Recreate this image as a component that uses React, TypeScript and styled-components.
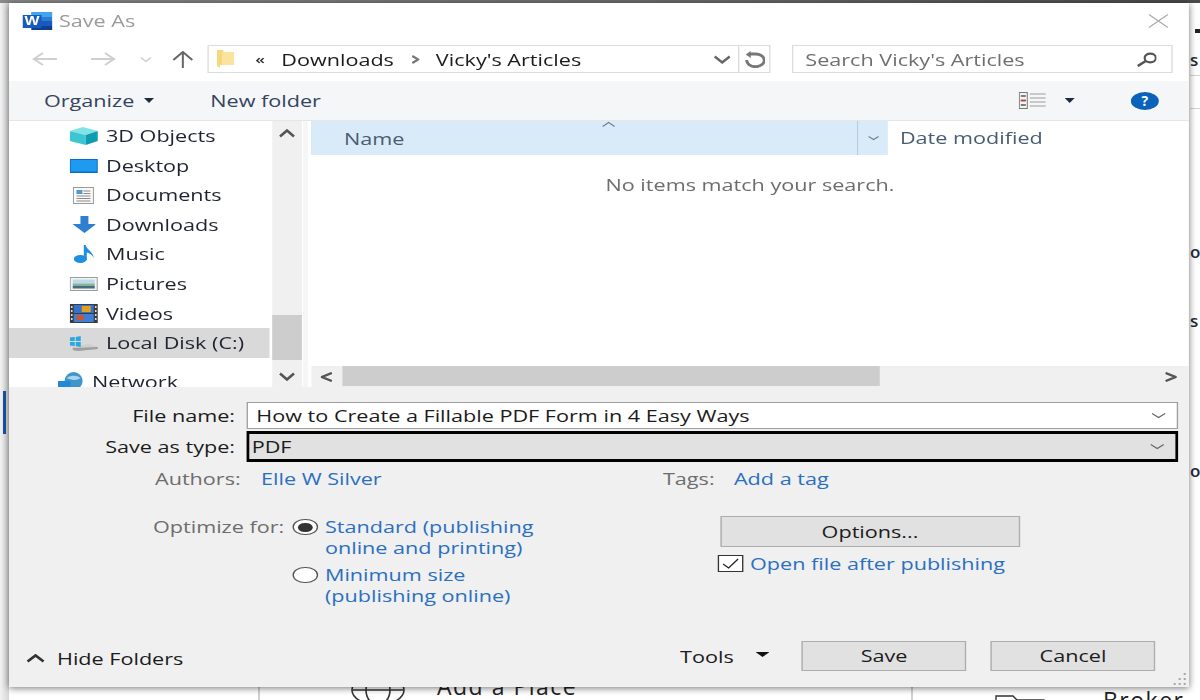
import React from "react"
import styled, { createGlobalStyle } from "styled-components"

// the source shot is stretched sideways, so the dialog is laid out narrow and scaled on x
const S = 1.35
const x = (n: number) => `${n / S}px`

const GlobalStyle = createGlobalStyle`
  html, body {
    margin: 0;
    width: 1200px;
    height: 700px;
    overflow: hidden;
    background: #fff;
  }
  * { box-sizing: border-box; }
`

const Ico: React.FC<{ w: number; h: number; children: React.ReactNode }> = ({ w, h, children }) => (
  <IcoSvg $w={w} $h={h} viewBox={`0 0 ${w} ${h}`} preserveAspectRatio="none">
    {children}
  </IcoSvg>
)

const Chevron: React.FC<{ dir: "up" | "down" | "left" | "right"; color?: string; w?: number; h?: number; sw?: number }> = ({
  dir,
  color = "#555",
  w = 16,
  h = 9,
  sw = 2.4,
}) => {
  const d = {
    up: `M1 ${h - 1.5} L${w / 2} 1.5 L${w - 1} ${h - 1.5}`,
    down: `M1 1.5 L${w / 2} ${h - 1.5} L${w - 1} 1.5`,
    left: `M${w - 1} 1 L1 ${h / 2} L${w - 1} ${h - 1}`,
    right: `M1 1 L${w - 1} ${h / 2} L1 ${h - 1}`,
  }[dir]
  return (
    <Ico w={w} h={h}>
      <path d={d} fill="none" stroke={color} strokeWidth={sw} />
    </Ico>
  )
}

const Caret: React.FC<{ color?: string; w?: number; h?: number }> = ({ color = "#1c2b44", w = 10, h = 5 }) => (
  <Ico w={w} h={h}>
    <polygon points={`0,0 ${w},0 ${w / 2},${h}`} fill={color} />
  </Ico>
)

const ArrowIcon: React.FC<{ flip?: boolean; color: string }> = ({ flip, color }) => (
  <Ico w={26} h={16}>
    <g transform={flip ? "translate(26 0) scale(-1 1)" : undefined} fill="none" stroke={color} strokeWidth="2">
      <path d="M1 8 H25" />
      <path d="M11 2 L2 8 L11 14" />
    </g>
  </Ico>
)

const WordLogo = () => (
  <Ico w={30} h={18}>
    <rect x="9" y="0" width="21" height="18" fill="#2b7cd3" />
    <rect x="9" y="0" width="21" height="5" fill="#41a5ee" />
    <rect x="9" y="9" width="21" height="5" fill="#185abd" />
    <rect x="9" y="14" width="21" height="4" fill="#103f91" />
    <rect x="0" y="3" width="19" height="13" fill="#185abd" />
    <text x="9.5" y="13.4" textAnchor="middle" fontFamily="Liberation Sans, sans-serif" fontWeight="700" fontSize="12" fill="#fff" textLength="15" lengthAdjust="spacingAndGlyphs">
      W
    </text>
  </Ico>
)

const navIcons: Record<string, React.ReactNode> = {
  cube: (
    <Ico w={28} h={18}>
      <polygon points="0,4 13,0 28,4 16,8" fill="#7fe3e8" />
      <polygon points="0,4 16,8 16,18 0,14" fill="#3cc6d3" />
      <polygon points="16,8 28,4 28,14 16,18" fill="#0f9bb0" />
    </Ico>
  ),
  desktop: (
    <Ico w={28} h={14}>
      <rect x="0" y="0" width="28" height="14" fill="#0a6cc4" />
      <rect x="1" y="1" width="26" height="11.5" fill="#1e9af0" />
    </Ico>
  ),
  documents: (
    <Ico w={22} h={17}>
      <rect x="1" y="0.5" width="20" height="16" fill="#fafafa" stroke="#9a9a9a" />
      <rect x="4" y="3" width="6" height="4" fill="#4e9ad8" />
      <path d="M11 4H18M11 6.5H18M4 9H18M4 11.5H18M4 14H18" stroke="#8a8a8a" strokeWidth="1" />
    </Ico>
  ),
  downloads: (
    <Ico w={24} h={17}>
      <polygon points="8,0 16,0 16,8 24,8 12,17 0,8 8,8" fill="#2f7fd0" />
    </Ico>
  ),
  music: (
    <Ico w={20} h={18}>
      <ellipse cx="6.5" cy="14" rx="6.5" ry="4" fill="#1f8fe0" />
      <path d="M10 15 V0 H12 C13 5 19 6 20 13 C18 9 15 8 13 7.5 V15 Z" fill="#1f8fe0" />
    </Ico>
  ),
  pictures: (
    <Ico w={28} h={14}>
      <rect x="0.5" y="0.5" width="27" height="13" fill="#f3f3f3" stroke="#9c9c9c" />
      <rect x="3" y="2.5" width="22" height="4" fill="#b9dbea" />
      <rect x="3" y="6.5" width="22" height="2.5" fill="#8fae9a" />
      <rect x="3" y="9" width="22" height="2.5" fill="#3f6f80" />
    </Ico>
  ),
  videos: (
    <Ico w={28} h={19}>
      <rect x="0" y="0" width="28" height="19" fill="#3b3b3b" />
      <rect x="4" y="1" width="20" height="8" fill="#3273cf" />
      <rect x="4" y="10" width="20" height="8" fill="#3f7fd8" />
      <rect x="12" y="2" width="9" height="6" fill="#e0a020" />
      <rect x="7" y="11" width="7" height="5" fill="#d3532b" />
      <path d="M2 2V17M26 2V17" stroke="#ddd" strokeWidth="1.6" strokeDasharray="2 2" />
    </Ico>
  ),
  disk: (
    <Ico w={28} h={15}>
      <polygon points="3,10 20,8 28,11 28,13 8,15 3,14" fill="#cfcfcf" />
      <polygon points="3,12 28,11 28,13 8,15 3,14" fill="#9f9f9f" />
      <path d="M0 1.5 L5 1 V5 H0 Z M6 1 L11 0 V5 H6 Z M0 6 H5 V10 L0 9.5 Z M6 6 H11 V11 L6 10 Z" fill="#25a9e0" />
    </Ico>
  ),
  network: (
    <Ico w={27} h={20}>
      <circle cx="16" cy="9" r="9" fill="#3f97c9" />
      <path d="M9 6 C13 3 19 3 23 6 C19 9 13 8 9 6Z" fill="#a9d6ea" />
      <rect x="0" y="9" width="13" height="11" fill="#2488d8" />
    </Ico>
  ),
}

const navItems = [
  { icon: "cube", label: "3D Objects" },
  { icon: "desktop", label: "Desktop" },
  { icon: "documents", label: "Documents" },
  { icon: "downloads", label: "Downloads" },
  { icon: "music", label: "Music" },
  { icon: "pictures", label: "Pictures" },
  { icon: "videos", label: "Videos" },
  { icon: "disk", label: "Local Disk (C:)", selected: true },
]

const App: React.FC = () => (
  <>
    <GlobalStyle />
    <TopEdge />
    <LeftEdge>
      <TaskMark />
    </LeftEdge>
    <BehindCaret />
    <RightRule $top={75} />
    <RightRule $top={108} />
    <RightFragment $top={48}>s</RightFragment>
    <RightFragment $top={240}>o</RightFragment>
    <RightFragment $top={309}>se</RightFragment>
    <RightFragment $top={459}>o</RightFragment>
    <BehindLine $left={258} />
    <BehindLine $left={911} />
    <BehindGlobe>
      <svg width="54" height="40" viewBox="0 0 54 40" fill="none" stroke="#333" strokeWidth="1.6">
        <ellipse cx="27" cy="17" rx="26" ry="15" />
        <ellipse cx="27" cy="17" rx="12" ry="15" />
        <path d="M2 17 H52" />
      </svg>
    </BehindGlobe>
    <BehindText $left={437} $top={670}>Add a Place</BehindText>
    <BehindFolder>
      <svg width="50" height="14" viewBox="0 0 50 14" fill="none" stroke="#333" strokeWidth="1.4">
        <path d="M1 14 V2 H18 L22 6 H49 V14" />
      </svg>
    </BehindFolder>
    <BehindText $left={1103} $top={684}>Broker</BehindText>

    <Dialog>
      <TitleBar>
        <WordLogo />
        <TitleText>Save As</TitleText>
        <CloseIcon>
          <Ico w={20} h={14}>
            <path d="M0.5 0.5 L19.5 13.5 M19.5 0.5 L0.5 13.5" stroke="#a8a8a8" strokeWidth="1.1" fill="none" />
          </Ico>
        </CloseIcon>
      </TitleBar>

      <NavBar>
        <NavArrows>
          <ArrowIcon color="#cfcfcf" />
          <ArrowIcon flip color="#cfcfcf" />
          <NavDrop>
            <Chevron dir="down" color="#cfcfcf" w={12} h={7} sw={1.6} />
          </NavDrop>
          <UpArrow>
            <Ico w={21} h={17}>
              <path d="M10.5 17 V2 M1 9 L10.5 1 L20 9" fill="none" stroke="#666" strokeWidth="2" />
            </Ico>
          </UpArrow>
        </NavArrows>
        <AddressBox>
          <FolderSlot>
            <Ico w={17} h={18}>
              <polygon points="0,0 6,0 7,2 17,2 17,15 3,15 3,18 0,16" fill="#f7d680" />
              <rect x="5" y="2" width="12" height="13" fill="#fbe39c" />
            </Ico>
          </FolderSlot>
          <Overflow>«</Overflow>
          <Crumb>Downloads</Crumb>
          <CrumbSep>
            <Chevron dir="right" color="#777" w={8} h={9} sw={2.2} />
          </CrumbSep>
          <Crumb>Vicky's Articles</Crumb>
          <AddressChevron>
            <Chevron dir="down" color="#666" w={17} h={9} />
          </AddressChevron>
          <RefreshCell>
            <Ico w={21} h={17}>
              <path d="M4 3 H11 C16 3 19.5 6 19.5 9.5 C19.5 13 15 15.7 10.5 15.7 C6 15.7 2 13 2 9" fill="none" stroke="#777" strokeWidth="2.8" />
              <polygon points="6,0 6,7 1,3.5" fill="#777" />
            </Ico>
          </RefreshCell>
        </AddressBox>
        <SearchBox>
          <SearchHint>Search Vicky's Articles</SearchHint>
          <Ico w={21} h={15}>
            <ellipse cx="14" cy="6" rx="5.6" ry="4.3" fill="none" stroke="#555" strokeWidth="2.2" />
            <path d="M9.5 9 L1.5 14" stroke="#555" strokeWidth="2.6" />
          </Ico>
        </SearchBox>
      </NavBar>

      <Toolbar>
        <ToolText>Organize</ToolText>
        <OrganizeCaret>
          <Caret />
        </OrganizeCaret>
        <ToolText>New folder</ToolText>
        <ToolRight>
          <Ico w={27} h={17}>
            <rect x="0.5" y="0.5" width="8" height="16" fill="#f4f4f4" stroke="#777" />
            <path d="M2 4H7M2 8.5H7M2 13H7" stroke="#555" strokeWidth="1.4" />
            <path d="M2 8.5H7" stroke="#c6403a" strokeWidth="1.4" />
            <path d="M11 2H27M11 6H27M11 10H27M11 14H27" stroke="#999" strokeWidth="1.2" />
          </Ico>
          <ViewCaret>
            <Caret w={10} h={5} />
          </ViewCaret>
          <Ico w={28} h={18}>
            <ellipse cx="14" cy="9" rx="14" ry="9" fill="#0a63b8" />
            <text x="14" y="14" textAnchor="middle" fontFamily="Open Sans, sans-serif" fontWeight="700" fontSize="14" fill="#fff">
              ?
            </text>
          </Ico>
        </ToolRight>
      </Toolbar>

      <Middle>
        <NavPane>
          {navItems.map(item => (
            <NavRow key={item.label} $selected={item.selected}>
              <NavIcon>{navIcons[item.icon]}</NavIcon>
              <NavLabel>{item.label}</NavLabel>
            </NavRow>
          ))}
          <NetworkRow>
            <NetworkIcon>{navIcons.network}</NetworkIcon>
            <NavLabel>Network</NavLabel>
          </NetworkRow>
        </NavPane>
        <VScroll>
          <VArrow $h={30}>
            <Chevron dir="up" w={16} h={9} sw={2.6} />
          </VArrow>
          <VThumb />
          <VArrow $h={21}>
            <Chevron dir="down" w={16} h={9} sw={2.6} />
          </VArrow>
        </VScroll>
        <Splitter />
        <ListPane>
          <ListHeader>
            <NameHead>
              Name
              <SortMark>
                <Chevron dir="up" color="#6f7f90" w={14} h={7} sw={1.1} />
              </SortMark>
            </NameHead>
            <HeadChevron>
              <Chevron dir="down" color="#6f7f90" w={12} h={6} sw={1.1} />
            </HeadChevron>
            <DateHead>Date modified</DateHead>
          </ListHeader>
          <EmptyNote>No items match your search.</EmptyNote>
          <HScroll>
            <HArrow>
              <Chevron dir="left" w={12} h={10} sw={2.4} />
            </HArrow>
            <HThumb />
            <HArrowEnd>
              <Chevron dir="right" w={12} h={10} sw={2.4} />
            </HArrowEnd>
          </HScroll>
        </ListPane>
      </Middle>

      <Form>
        <FieldRow>
          <FieldLabel>File name:</FieldLabel>
          <NameField>
            How to Create a Fillable PDF Form in 4 Easy Ways
            <FieldChevron>
              <Chevron dir="down" color="#666" w={15} h={7} sw={1.2} />
            </FieldChevron>
          </NameField>
        </FieldRow>
        <FieldRow>
          <FieldLabel>Save as type:</FieldLabel>
          <TypeField>
            PDF
            <FieldChevron>
              <Chevron dir="down" color="#666" w={15} h={7} sw={1.2} />
            </FieldChevron>
          </TypeField>
        </FieldRow>

        <MetaRow>
          <MetaCell $w={106}>
            <MutedText>Authors:</MutedText>
          </MetaCell>
          <MetaCell $w={402}>
            <LinkText>Elle W Silver</LinkText>
          </MetaCell>
          <MetaCell $w={71}>
            <MutedText>Tags:</MutedText>
          </MetaCell>
          <LinkText>Add a tag</LinkText>
        </MetaRow>

        <OptionsArea>
          <OptimizeColumn>
            <OptimizeLabel>
              <MutedText>Optimize for:</MutedText>
            </OptimizeLabel>
            <RadioStack>
              <RadioRow>
                <Radio>
                  <RadioDot />
                </Radio>
                <RadioText>
                  Standard (publishing
                  <br />
                  online and printing)
                </RadioText>
              </RadioRow>
              <RadioRow>
                <Radio />
                <RadioText>
                  Minimum size
                  <br />
                  (publishing online)
                </RadioText>
              </RadioRow>
            </RadioStack>
          </OptimizeColumn>
          <SideColumn>
            <OptionsButton>Options...</OptionsButton>
            <CheckRow>
              <CheckBox>
                <Ico w={23} h={15}>
                  <path d="M4 8 L9.5 12 L19 3" fill="none" stroke="#222" strokeWidth="1.3" />
                </Ico>
              </CheckBox>
              <LinkText>Open file after publishing</LinkText>
            </CheckRow>
          </SideColumn>
        </OptionsArea>

        <Footer>
          <HideFolders>
            <Chevron dir="up" color="#333" w={18} h={9} sw={2.8} />
            <HideLabel>Hide Folders</HideLabel>
          </HideFolders>
          <FooterRight>
            <ToolsLabel>Tools</ToolsLabel>
            <ToolsCaret>
              <Caret color="#111" w={14} h={5} />
            </ToolsCaret>
            <FooterButton>Save</FooterButton>
            <FooterButton>Cancel</FooterButton>
          </FooterRight>
        </Footer>

        <Grip>
          <Ico w={14} h={14}>
            <path d="M11 2h2v2h-2zM6 7h2v2H6zM11 7h2v2h-2zM1 12h2v2H1zM6 12h2v2H6zM11 12h2v2h-2z" fill="#a6a6a6" />
          </Ico>
        </Grip>
      </Form>
    </Dialog>
  </>
)

const IcoSvg = styled.svg<{ $w: number; $h: number }>`
  display: block;
  flex: none;
  width: ${p => x(p.$w)};
  height: ${p => p.$h}px;
`

const TopEdge = styled.div`
  position: absolute;
  inset: 0 0 auto 0;
  height: 3px;
  background: linear-gradient(90deg, #8a8a8a, #6a6a6a 60%, #4a4a4a);
`

const LeftEdge = styled.div`
  position: absolute;
  left: 0;
  top: 3px;
  width: 9px;
  height: 697px;
  background: linear-gradient(90deg, #f2f2f2, #d6d6d6);
`

const TaskMark = styled.div`
  position: absolute;
  left: 3px;
  top: 388px;
  width: 3px;
  height: 43px;
  background: #1a52a8;
`

const RightFragment = styled.div<{ $top: number }>`
  position: absolute;
  left: 1190px;
  top: ${p => p.$top}px;
  font: 600 17px "Open Sans", sans-serif;
  letter-spacing: 2px;
  color: #1f2a3a;
`

const RightRule = styled.div<{ $top: number }>`
  position: absolute;
  left: 1190px;
  right: 0;
  top: ${p => p.$top}px;
  height: 1px;
  background: #d4d4d4;
`

const BehindCaret = styled.div`
  position: absolute;
  left: 1195px;
  top: 29px;
  width: 5px;
  height: 4px;
  background: #222;
`

const BehindLine = styled.div<{ $left: number }>`
  position: absolute;
  left: ${p => p.$left}px;
  top: 687px;
  width: 2px;
  height: 13px;
  background: #d0d0d0;
`

const BehindGlobe = styled.div`
  position: absolute;
  left: 351px;
  top: 673px;
`

const BehindFolder = styled.div`
  position: absolute;
  left: 995px;
  top: 694px;
`

const BehindText = styled.div<{ $left: number; $top: number }>`
  position: absolute;
  left: ${p => p.$left}px;
  top: ${p => p.$top}px;
  font: 400 23px "Open Sans", sans-serif;
  letter-spacing: 1.5px;
  color: #222;
`

const Dialog = styled.div`
  position: absolute;
  left: 9px;
  top: 3px;
  width: ${x(1180)};
  height: 684px;
  transform: scaleX(${S});
  transform-origin: 0 0;
  display: flex;
  flex-direction: column;
  background: #fff;
  box-shadow: 0 1px 6px rgba(0, 0, 0, 0.55);
  font-family: "Open Sans", "Liberation Sans", sans-serif;
  font-size: 16px;
  color: #1b1b1b;
`

const TitleBar = styled.div`
  height: 35px;
  flex: none;
  display: flex;
  align-items: center;
  padding: 0 ${x(21)} 0 ${x(13)};
`

const TitleText = styled.span`
  margin-left: ${x(7)};
  color: #9a9a9a;
`

const CloseIcon = styled.div`
  margin-left: auto;
`

const NavBar = styled.div`
  height: 43px;
  flex: none;
  display: flex;
  align-items: flex-start;
  padding-top: 7px;
`

const NavArrows = styled.div`
  width: ${x(199)};
  height: 28px;
  padding-left: ${x(23)};
  display: flex;
  align-items: center;
  gap: ${x(32)};
  flex: none;
`

const NavDrop = styled.div`
  margin-left: ${x(-8)};
`

const UpArrow = styled.div`
  margin-left: ${x(-11)};
`

const AddressBox = styled.div`
  width: ${x(563)};
  height: 28px;
  flex: none;
  display: flex;
  align-items: center;
  border: 1px solid #dcdcdc;
  border-width: 1.5px ${x(1.5)};
`

const FolderSlot = styled.div`
  margin-left: ${x(8)};
`

const Overflow = styled.span`
  margin-left: ${x(21)};
  width: ${x(26)};
  font-size: 13px;
  font-weight: 600;
  color: #333;
`

const Crumb = styled.span`
  padding-top: 2px;
  white-space: nowrap;
`

const CrumbSep = styled.span`
  margin: 0 ${x(17)};
`

const AddressChevron = styled.div`
  margin-left: auto;
  margin-right: ${x(8)};
`

const RefreshCell = styled.div`
  width: ${x(31)};
  height: 100%;
  display: flex;
  align-items: center;
  justify-content: center;
  border-left: ${x(1.5)} solid #dcdcdc;
`

const SearchBox = styled.div`
  margin-left: ${x(21)};
  width: ${x(381)};
  height: 28px;
  flex: none;
  display: flex;
  align-items: center;
  justify-content: space-between;
  padding: 0 ${x(15)} 0 ${x(12)};
  border: 1px solid #dcdcdc;
  border-width: 1.5px ${x(1.5)};
`

const SearchHint = styled.span`
  padding-top: 2px;
  color: #6f6f6f;
`

const Toolbar = styled.div`
  height: 40px;
  flex: none;
  display: flex;
  align-items: center;
  padding-left: ${x(35)};
  background: #f5f6f7;
  border-bottom: 1px solid #e6e6e6;
`

const ToolText = styled.span`
  color: #33445f;
`

const OrganizeCaret = styled.div`
  margin: 0 ${x(56)} 0 ${x(10)};
`

const ToolRight = styled.div`
  margin-left: auto;
  padding-right: ${x(30)};
  display: flex;
  align-items: center;
`

const ViewCaret = styled.div`
  margin: 0 ${x(56)} 0 ${x(19)};
`

const Middle = styled.div`
  height: 266px;
  flex: none;
  display: flex;
`

const NavPane = styled.div`
  width: ${x(263)};
  flex: none;
  padding-top: 0.3px;
  overflow: hidden;
`

const NavRow = styled.div<{ $selected?: boolean }>`
  width: ${x(261)};
  height: 29.6px;
  display: flex;
  align-items: center;
  padding-left: ${x(61)};
  background: ${p => (p.$selected ? "#d9d9d9" : "transparent")};
`

const NetworkRow = styled.div`
  height: 29.6px;
  margin-top: 9px;
  display: flex;
  align-items: center;
  padding-left: ${x(48)};
`

const NavIcon = styled.div`
  width: ${x(28)};
  margin-right: ${x(8)};
  display: flex;
  justify-content: center;
  flex: none;
`

const NetworkIcon = styled.div`
  margin-right: ${x(8)};
`

const NavLabel = styled.span`
  white-space: nowrap;
  color: #1f2430;
`

const VScroll = styled.div`
  width: ${x(30)};
  flex: none;
  display: flex;
  flex-direction: column;
  background: #f0f0f0;
`

const VArrow = styled.div<{ $h: number }>`
  height: ${p => p.$h}px;
  flex: none;
  display: flex;
  align-items: center;
  justify-content: center;
  padding-bottom: ${p => (p.$h > 25 ? 6 : 0)}px;
`

const VThumb = styled.div`
  height: 45px;
  margin: auto 0 6px;
  background: #cdcdcd;
`

const Splitter = styled.div`
  width: ${x(9)};
  flex: none;
  background: linear-gradient(90deg, #fff 0 15%, #f6f6f6 15% 65%, #fff 65%);
`

const ListPane = styled.div`
  flex: 1;
  min-width: 0;
  display: flex;
  flex-direction: column;
`

const ListHeader = styled.div`
  height: 34px;
  flex: none;
  display: flex;
`

const NameHead = styled.div`
  position: relative;
  width: ${x(546)};
  flex: none;
  display: flex;
  align-items: center;
  padding: 1px 0 0 ${x(33)};
  background: #d9ebf9;
  color: #4a5b72;
`

const SortMark = styled.div`
  position: absolute;
  left: ${x(291)};
  top: 0;
`

const HeadChevron = styled.div`
  width: ${x(31)};
  flex: none;
  display: flex;
  align-items: center;
  justify-content: center;
  background: #d9ebf9;
  border-left: ${x(1.5)} solid #b4cde2;
`

const DateHead = styled.div`
  display: flex;
  align-items: center;
  padding: 0 0 0 ${x(12)};
  color: #4a5b72;
`

const EmptyNote = styled.div`
  flex: 1;
  padding-top: 18px;
  line-height: 24px;
  text-align: center;
  color: #6d6d6d;
`

const HScroll = styled.div`
  height: 21px;
  flex: none;
  display: flex;
  background: #f0f0f0;
`

const HArrow = styled.div`
  width: ${x(32)};
  flex: none;
  display: flex;
  align-items: center;
  justify-content: center;
`

const HThumb = styled.div`
  width: ${x(537)};
  height: 20px;
  flex: none;
  background: #cdcdcd;
`

const HArrowEnd = styled.div`
  margin-left: auto;
  padding-right: ${x(12)};
  display: flex;
  align-items: center;
`

const Form = styled.div`
  position: relative;
  flex: 1;
  display: flex;
  flex-direction: column;
  padding-top: 15px;
  background: #f0f0f0;
`

const FieldRow = styled.div`
  display: flex;
  align-items: center;
  margin-bottom: 2px;
`

const FieldLabel = styled.div`
  width: ${x(226)};
  margin-right: ${x(11)};
  flex: none;
  text-align: right;
  color: #1b1b1b;
`

const NameField = styled.div`
  position: relative;
  width: ${x(932)};
  height: 27px;
  flex: none;
  display: flex;
  align-items: center;
  padding-left: ${x(9)};
  background: #fff;
  border: 1px solid #9e9e9e;
  border-width: 1.5px ${x(1.5)};
`

const TypeField = styled(NameField)`
  height: 31px;
  padding-left: ${x(3)};
  background: #e1e1e1;
  border: 3px solid #000;
  border-width: 3px ${x(3)};
`

const FieldChevron = styled.div`
  margin-left: auto;
  margin-right: ${x(10)};
`

const MetaRow = styled.div`
  height: 24px;
  margin-top: 3px;
  flex: none;
  display: flex;
  align-items: center;
  padding-left: ${x(146)};
`

const MetaCell = styled.div<{ $w: number }>`
  width: ${p => x(p.$w)};
  flex: none;
`

const MutedText = styled.span`
  color: #6d6d6d;
  white-space: nowrap;
`

const LinkText = styled.span`
  color: #2a6fc1;
  white-space: nowrap;
`

const OptionsArea = styled.div`
  margin-top: 26px;
  flex: none;
  display: flex;
  padding-left: ${x(144)};
`

const OptimizeColumn = styled.div`
  width: ${x(567)};
  flex: none;
  display: flex;
`

const OptimizeLabel = styled.div`
  width: ${x(140)};
  flex: none;
  line-height: 20.5px;
`

const RadioStack = styled.div`
  display: flex;
  flex-direction: column;
  gap: 7px;
`

const RadioRow = styled.div`
  display: flex;
  align-items: flex-start;
`

const Radio = styled.div`
  width: ${x(25)};
  height: 16px;
  margin: 2px ${x(7)} 0 0;
  flex: none;
  display: flex;
  align-items: center;
  justify-content: center;
  border: 1px solid #555;
  border-width: 1.2px ${x(1.6)};
  border-radius: 50%;
  background: #fff;
`

const RadioDot = styled.div`
  width: ${x(14)};
  height: 9px;
  border-radius: 50%;
  background: #333;
`

const RadioText = styled.div`
  line-height: 20.5px;
  color: #2a6fc1;
  white-space: nowrap;
`

const SideColumn = styled.div`
  display: flex;
  flex-direction: column;
  margin-top: -1px;
`

const OptionsButton = styled.div`
  width: ${x(300)};
  height: 31px;
  display: flex;
  align-items: center;
  justify-content: center;
  background: #e1e1e1;
  border: 1px solid #adadad;
  border-width: 1.4px ${x(1.6)};
`

const CheckRow = styled.div`
  height: 17px;
  margin: 8px 0 0 ${x(-2)};
  display: flex;
  align-items: center;
`

const CheckBox = styled.div`
  width: ${x(25)};
  height: 17px;
  margin-right: ${x(7)};
  flex: none;
  display: flex;
  align-items: center;
  justify-content: center;
  background: #fff;
  border: 1px solid #333;
  border-width: 1.2px ${x(1.6)};
`

const Footer = styled.div`
  margin-top: auto;
  margin-bottom: 16px;
  height: 30px;
  flex: none;
  display: flex;
  align-items: center;
`

const HideFolders = styled.div`
  margin-left: ${x(18)};
  padding-top: 5px;
  display: flex;
  align-items: center;
`

const HideLabel = styled.span`
  margin-left: ${x(12)};
`

const FooterRight = styled.div`
  margin-left: auto;
  padding-right: ${x(34)};
  display: flex;
  align-items: center;
`

const ToolsLabel = styled.span`
  width: ${x(75)};
  padding-top: 1px;
  flex: none;
`

const ToolsCaret = styled.div`
  margin-right: ${x(33)};
  margin-bottom: 3px;
`

const FooterButton = styled.div`
  width: ${x(164)};
  height: 30px;
  flex: none;
  display: flex;
  align-items: center;
  justify-content: center;
  background: #e1e1e1;
  border: 1px solid #adadad;
  border-width: 1.4px ${x(1.6)};

  & + & {
    margin-left: ${x(25)};
  }
`

const Grip = styled.div`
  position: absolute;
  right: ${x(2)};
  bottom: 2px;
`

export default App
